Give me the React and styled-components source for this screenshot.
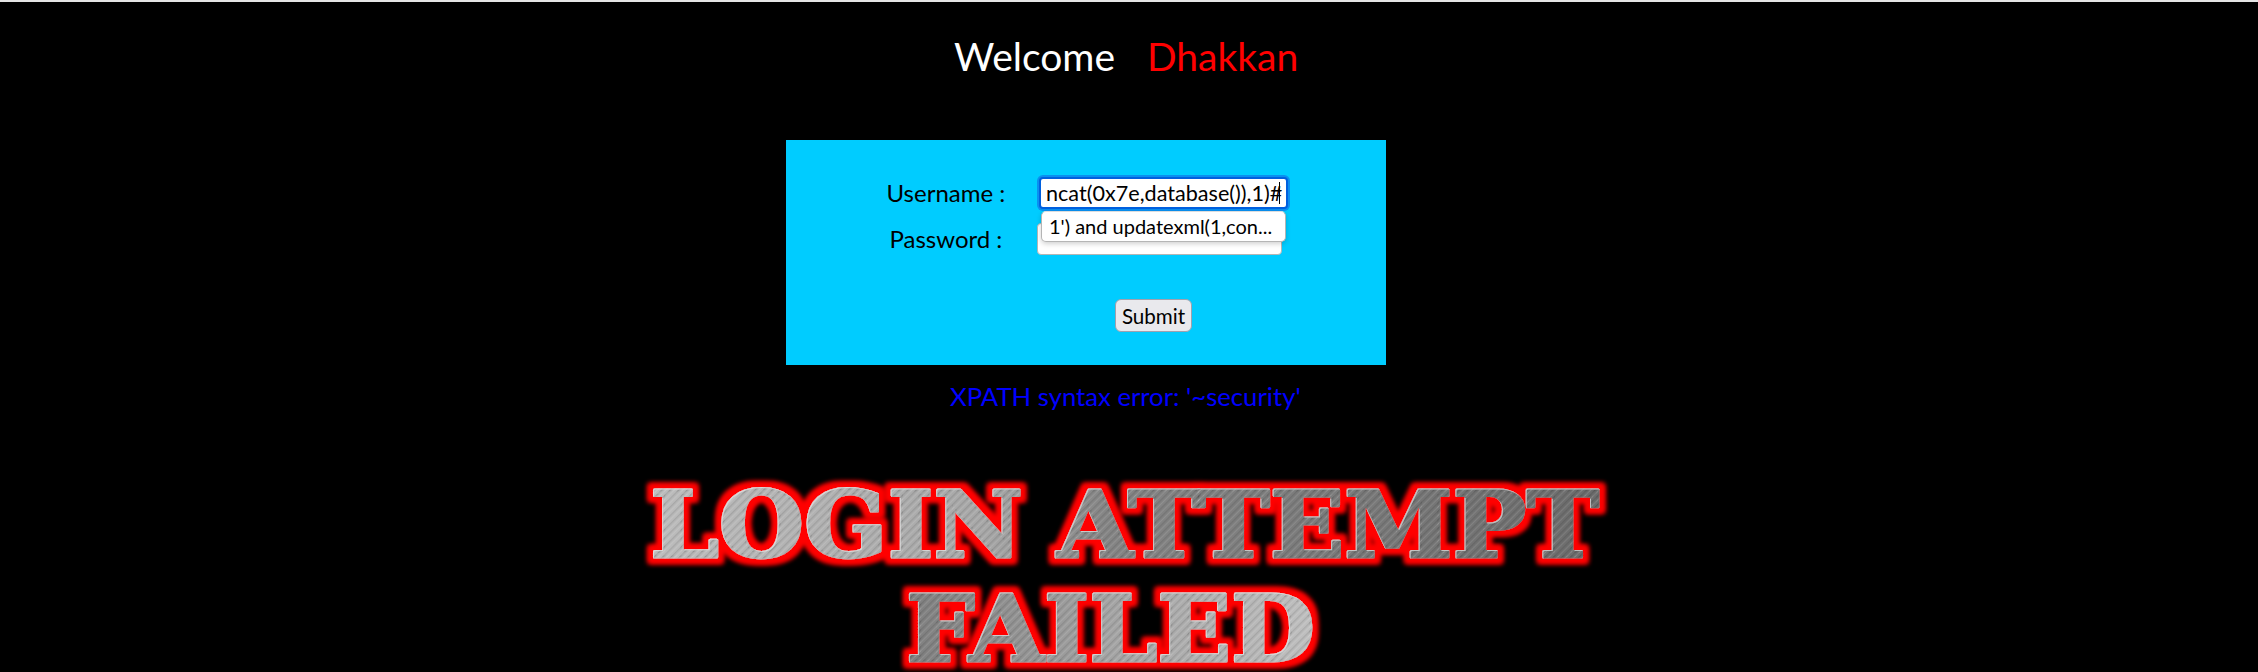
import React from "react";
import styled, { createGlobalStyle } from "styled-components";

const Global = createGlobalStyle`
  html, body { margin: 0; padding: 0; background: #000; overflow: hidden; }
  body { font-family: Lato, "Noto Sans", sans-serif; }
`;

const Page = styled.main`
  width: 2258px;
  height: 672px;
  box-sizing: border-box;
  border-top: 2px solid #e4e4e4;
  background: #000;
`;

const Title = styled.h1`
  display: flex;
  gap: 32px;
  margin: 29px 0 0 954px;
  height: 50px;
  font-size: 39px;
  line-height: 50px;
  font-weight: 400;
`;

const TitleWord = styled.span`
  color: ${(p) => p.$color};
`;

const Panel = styled.form`
  width: 600px;
  height: 225px;
  box-sizing: border-box;
  margin: 59px 0 0 786px;
  padding-top: 37px;
  background: #00ccff;
`;

const Row = styled.div`
  display: flex;
  align-items: center;
  margin-bottom: 14px;
`;

const Label = styled.label`
  width: 180px;
  margin-left: 73px;
  margin-right: -3px;
  margin-top: ${(p) => p.$shift || 0}px;
  text-align: center;
  color: #000;
  font-size: 24px;
  line-height: 32px;
  white-space: pre;
`;

const Field = styled.div`
  position: relative;
  margin-left: ${(p) => p.$inset}px;
  display: flex;
`;

const Input = styled.input`
  box-sizing: border-box;
  width: ${(p) => p.$w}px;
  height: 32px;
  background: #fff;
  color: #000;
  font-family: inherit;
  font-size: 21.6px;
  padding: 0 0 0 ${(p) => (p.$focused ? 5 : 6)}px;
  outline: none;
  border: ${(p) => (p.$focused ? "2px solid #0060df" : "1px solid #b5b5b5")};
  border-radius: 4px;
  box-shadow: ${(p) => (p.$focused ? "0 0 0 2px #0a8ff0" : "none")};
`;

const Caret = styled.i`
  position: absolute;
  left: 240px;
  top: 5px;
  width: 1px;
  height: 22px;
  background: #000;
`;

const Suggestion = styled.div`
  position: absolute;
  z-index: 2;
  left: 2px;
  top: 34px;
  box-sizing: border-box;
  width: 245px;
  height: 31px;
  padding-left: 7px;
  background: #fff;
  color: #000;
  border: 1px solid #b5b5b5;
  border-top-color: #ddd;
  border-radius: 5px;
  font-size: 20px;
  line-height: 28px;
  box-shadow: 0 2px 5px rgba(0, 0, 0, 0.18);
`;

const SubmitButton = styled.button`
  display: block;
  box-sizing: border-box;
  width: 77px;
  height: 33px;
  margin: 44px 0 0 329px;
  padding: 0;
  background: #e9e9ed;
  color: #000;
  border: 1px solid #a0a0ad;
  border-radius: 6px;
  font-family: inherit;
  font-size: 20.6px;
  line-height: 30px;
`;

const ErrorLine = styled.p`
  margin: 15px 0 0 950px;
  color: #0000ff;
  font-size: 25.7px;
  line-height: 33px;
`;

const Banner = styled.svg`
  display: block;
  margin: 64px 0 0 640px;
  overflow: visible;
`;

const BannerWord = styled.text`
  font-family: "DejaVu Serif", serif;
  font-weight: 700;
  font-size: 92px;
`;

function FailedBanner() {
  const lines = [
    { t: "LOGIN ATTEMPT", x: 10, y: 79.5, w: 949, g: "g1" },
    { t: "FAILED", x: 266, y: 183.5, w: 409, g: "g2" },
  ];
  return (
    <Banner width="980" height="190" viewBox="0 0 980 190">
      <defs>
        <linearGradient id="g1" gradientUnits="userSpaceOnUse" x1="13" y1="0" x2="959" y2="0">
          <stop offset="0" stopColor="#bcbcbc" />
          <stop offset="0.35" stopColor="#a8a8a8" />
          <stop offset="0.48" stopColor="#858585" />
          <stop offset="0.8" stopColor="#777" />
          <stop offset="1" stopColor="#6c6c6c" />
        </linearGradient>
        <linearGradient id="g2" gradientUnits="userSpaceOnUse" x1="268" y1="0" x2="675" y2="0">
          <stop offset="0" stopColor="#7f7f7f" />
          <stop offset="0.5" stopColor="#a5a5a5" />
          <stop offset="1" stopColor="#c0c0c0" />
        </linearGradient>
        <pattern id="hatch" width="6" height="6" patternUnits="userSpaceOnUse" patternTransform="rotate(45)">
          <rect width="1.4" height="6" fill="#000" opacity="0.1" />
          <rect x="3" width="1" height="6" fill="#fff" opacity="0.1" />
        </pattern>
        <filter id="glow" x="-5%" y="-30%" width="110%" height="160%">
          <feMorphology in="SourceAlpha" operator="dilate" radius="5" result="fat" />
          <feGaussianBlur in="fat" stdDeviation="2.4" result="soft" />
          <feFlood floodColor="#ff0000" />
          <feComposite in2="soft" operator="in" result="red" />
          <feOffset in="SourceAlpha" dx="1" dy="1" result="shifted" />
          <feComposite in="SourceAlpha" in2="shifted" operator="out" result="edge" />
          <feFlood floodColor="#f4f4f4" floodOpacity="0.5" />
          <feComposite in2="edge" operator="in" result="shine" />
          <feMerge>
            <feMergeNode in="red" />
            <feMergeNode in="red" />
            <feMergeNode in="SourceGraphic" />
            <feMergeNode in="shine" />
          </feMerge>
        </filter>
      </defs>
      {lines.map((l) => (
        <g key={l.t} filter="url(#glow)">
          <BannerWord
            x={l.x}
            y={l.y}
            textLength={l.w}
            lengthAdjust="spacingAndGlyphs"
            fill={`url(#${l.g})`}
            stroke={`url(#${l.g})`}
            strokeWidth="3"
            strokeLinejoin="round"
          >
            {l.t}
          </BannerWord>
          <BannerWord
            x={l.x}
            y={l.y}
            textLength={l.w}
            lengthAdjust="spacingAndGlyphs"
            fill="url(#hatch)"
            stroke="url(#hatch)"
            strokeWidth="3"
            aria-hidden="true"
          >
            {l.t}
          </BannerWord>
        </g>
      ))}
    </Banner>
  );
}

export default function App() {
  return (
    <Page>
      <Global />
      <Title>
        <TitleWord $color="#fff">Welcome</TitleWord>
        <TitleWord $color="#ff0000">Dhakkan</TitleWord>
      </Title>
      <Panel onSubmit={(e) => e.preventDefault()}>
        <Row>
          <Label>Username : </Label>
          <Field $inset={3}>
            <Input $w={249} $focused readOnly value="ncat(0x7e,database()),1)#" />
            <Caret />
            <Suggestion>1') and updatexml(1,con...</Suggestion>
          </Field>
        </Row>
        <Row>
          <Label $shift={-1}>Password : </Label>
          <Field $inset={1}>
            <Input $w={245} type="password" readOnly value="" />
          </Field>
        </Row>
        <SubmitButton type="submit">Submit</SubmitButton>
      </Panel>
      <ErrorLine>XPATH syntax error: '~security'</ErrorLine>
      <FailedBanner />
    </Page>
  );
}
